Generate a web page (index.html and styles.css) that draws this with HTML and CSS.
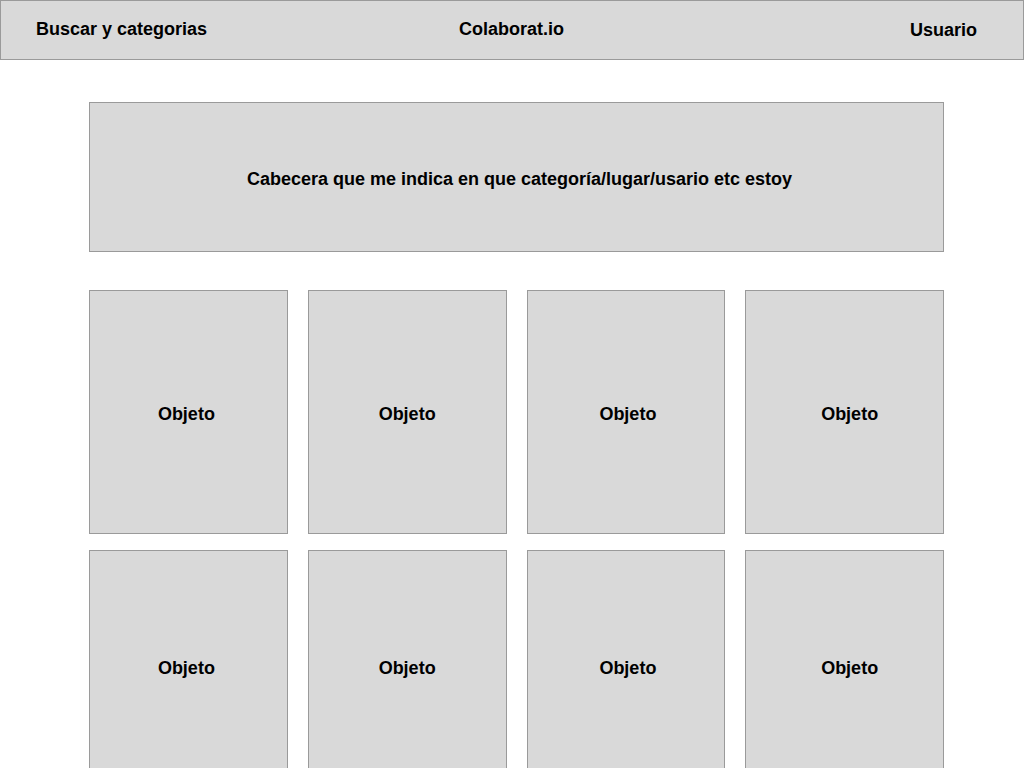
FILE: index.html
```html
<!DOCTYPE html>
<html lang="es">
<head>
<meta charset="utf-8">
<title>Colaborat.io</title>
<link rel="stylesheet" href="styles.css">
</head>
<body>
<header class="topbar">
  <div class="topbar-left">Buscar y categorias</div>
  <div class="topbar-center">Colaborat.io</div>
  <div class="topbar-right">Usuario</div>
</header>
<main class="content">
  <section class="hero">Cabecera que me indica en que categoría/lugar/usario etc estoy</section>
  <section class="grid">
    <div class="card">Objeto</div>
    <div class="card">Objeto</div>
    <div class="card">Objeto</div>
    <div class="card">Objeto</div>
    <div class="card">Objeto</div>
    <div class="card">Objeto</div>
    <div class="card">Objeto</div>
    <div class="card">Objeto</div>
  </section>
</main>
</body>
</html>
```
FILE: styles.css
```css
html, body {
  margin: 0;
  padding: 0;
  background: #ffffff;
  font-family: "Liberation Sans", Arial, sans-serif;
  font-weight: bold;
  font-size: 18px;
  color: #000000;
}

.topbar {
  box-sizing: border-box;
  height: 60px;
  background: #d9d9d9;
  border: 1px solid #9a9a9a;
  display: grid;
  grid-template-columns: 1fr auto 1fr;
  align-items: start;
  padding: 18px 46px 0 35px;
}

.topbar-left {
  justify-self: start;
}

.topbar-center {
  justify-self: center;
  margin-left: 10px;
}

.topbar-right {
  justify-self: end;
  padding-top: 1px;
}

.content {
  width: 855px;
  margin-left: 89px;
  padding-top: 42px;
  display: flex;
  flex-direction: column;
  gap: 38px;
}

.hero {
  box-sizing: border-box;
  height: 150px;
  background: #d9d9d9;
  border: 1px solid #9a9a9a;
  display: flex;
  align-items: center;
  justify-content: center;
  padding: 4px 0 0 6px;
}

.grid {
  display: grid;
  grid-template-columns: repeat(4, 1fr);
  grid-template-rows: 244px 232px;
  column-gap: 20px;
  row-gap: 16px;
}

.card {
  box-sizing: border-box;
  background: #d9d9d9;
  border: 1px solid #9a9a9a;
  display: flex;
  align-items: center;
  justify-content: center;
  padding-top: 4px;
}

.card:nth-child(4n+1) {
  padding-right: 4px;
}

.card:nth-child(4n+3) {
  padding-left: 4px;
}

.card:nth-child(4n+4) {
  padding-left: 10px;
}
```
